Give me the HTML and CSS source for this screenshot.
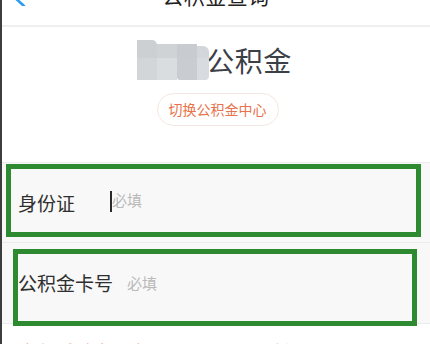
FILE: index.html
```html
<!DOCTYPE html>
<html lang="zh-CN">
<head>
<meta charset="utf-8">
<title>公积金查询</title>
<link rel="stylesheet" href="styles.css">
</head>
<body>
<div class="page">
  <header class="topbar">
    <svg class="back" width="20" height="24" viewBox="0 0 20 24" aria-hidden="true">
      <polyline points="16,2 4,13 16,24" fill="none" stroke="#2b9cf2" stroke-width="2.6" stroke-linecap="round" stroke-linejoin="round"/>
    </svg>
    <h1 class="title">公积金查询</h1>
  </header>

  <section class="hero">
    <div class="heading">
      <div class="mosaic" aria-hidden="true">
        <span class="t t1"></span><span class="t t2"></span><span class="t t3"></span><span class="t t4"></span>
        <span class="t t5"></span><span class="t t6"></span><span class="t t7"></span><span class="t t8"></span>
      </div>
      <span class="heading-text">公积金</span>
    </div>
    <button class="switch">切换公积金中心</button>
  </section>

  <div class="form">
    <div class="row row-id">
      <span class="label label-id">身份证</span>
      <span class="cursor"></span>
      <span class="placeholder">必填</span>
      <div class="mark mark-id"></div>
    </div>
    <div class="row row-card">
      <span class="label label-card">公积金卡号</span>
      <span class="placeholder">必填</span>
      <div class="mark mark-card"></div>
    </div>
    <div class="row-next">
      <span class="next-left">查询公积金卡号/密码</span>
      <span class="next-mid">忘记</span>
    </div>
  </div>
</div>
</body>
</html>
```

FILE: styles.css
```css
* { box-sizing: border-box; }
html, body { margin: 0; padding: 0; background: #fff; }
body {
  font-family: "Noto Sans CJK SC", "Noto Sans", sans-serif;
  width: 430px;
  height: 344px;
  overflow: hidden;
}
.page {
  border-left: 2px solid #3d3d3d;
  height: 344px;
  overflow: hidden;
  position: relative;
}
.topbar {
  height: 27px;
  border-bottom: 2px solid #efefef;
  display: flex;
  justify-content: center;
  align-items: flex-end;
  position: relative;
  overflow: hidden;
}
.back {
  position: absolute;
  left: 6px;
  top: -18px;
}
.title {
  margin: 0 0 19px 0;
  font-size: 21px;
  line-height: 21px;
  font-weight: 400;
  color: #222;
  flex-shrink: 0;
  letter-spacing: 0.5px;
}
.hero {
  height: 136px;
  display: flex;
  flex-direction: column;
  align-items: center;
  padding-top: 13px;
  border-bottom: 1px solid #ebebeb;
}
.heading {
  display: flex;
  align-items: center;
  height: 40px;
  margin-left: -3px;
}
.mosaic {
  width: 72px;
  height: 40px;
  display: grid;
  grid-template-columns: 20px 20px 20px 12px;
  grid-template-rows: 18px 22px;
  margin-right: -3px;
  position: relative;
  z-index: 1;
}
.t { display: block; }
.t1 { background: #cdd0d3; border-top-right-radius: 5px; }
.t2 { background: #d0d3d6; margin-top: 4px; }
.t3 { background: #c8cbcf; margin-top: 4px; }
.t4 { background: #d4d7da; margin-top: 6px; border-top-right-radius: 6px; }
.t5 { background: #d3d6d9; }
.t6 { background: #dadde0; }
.t7 { background: #c9ccd0; border-bottom-left-radius: 3px; }
.t8 { background: #d9dcdf; border-bottom-right-radius: 4px; }
.heading-text {
  font-size: 28px;
  line-height: 40px;
  color: #3b4047;
  letter-spacing: 0.5px;
}
.switch {
  margin-top: 13px;
  height: 33px;
  padding: 0 11px;
  border: 1px solid #f4e6e1;
  border-radius: 17px;
  background: #fff;
  color: #e8724c;
  font-family: "Noto Sans CJK SC", "Noto Sans", sans-serif;
  font-size: 14px;
  line-height: 31px;
  margin-left: 3px;
}
.form { background: #fff; }
.row {
  position: relative;
  display: flex;
  align-items: center;
  background: #f8f8f8;
  padding-left: 16px;
  border-bottom: 1px solid #ececec;
}
.row-id { height: 80px; }
.row-card { height: 81px; }
.label {
  font-size: 19px;
  color: #2f2f2f;
  line-height: 24px;
}
.label-id { width: 92px; }
.label-card { margin-right: 14px; }
.cursor {
  width: 2px;
  height: 21px;
  background: #2a2a2a;
  margin-top: -2px;
}
.placeholder {
  font-size: 15px;
  color: #b9b9b9;
  line-height: 20px;
}
.row-id .placeholder { margin-top: -6px; }
.mark {
  position: absolute;
  border: 5px solid #2e8a31;
}
.mark-id {
  left: 4px;
  top: 1px;
  width: 415px;
  height: 73px;
}
.mark-card {
  left: 11px;
  top: 6px;
  width: 404px;
  height: 77px;
}
.row-next {
  display: flex;
  align-items: flex-start;
  height: 30px;
  padding-top: 15px;
  padding-left: 18px;
}
.next-left {
  font-size: 15px;
  color: #f3b08c;
  width: 250px;
}
.next-mid {
  font-size: 15px;
  color: #cfcfcf;
}
```
